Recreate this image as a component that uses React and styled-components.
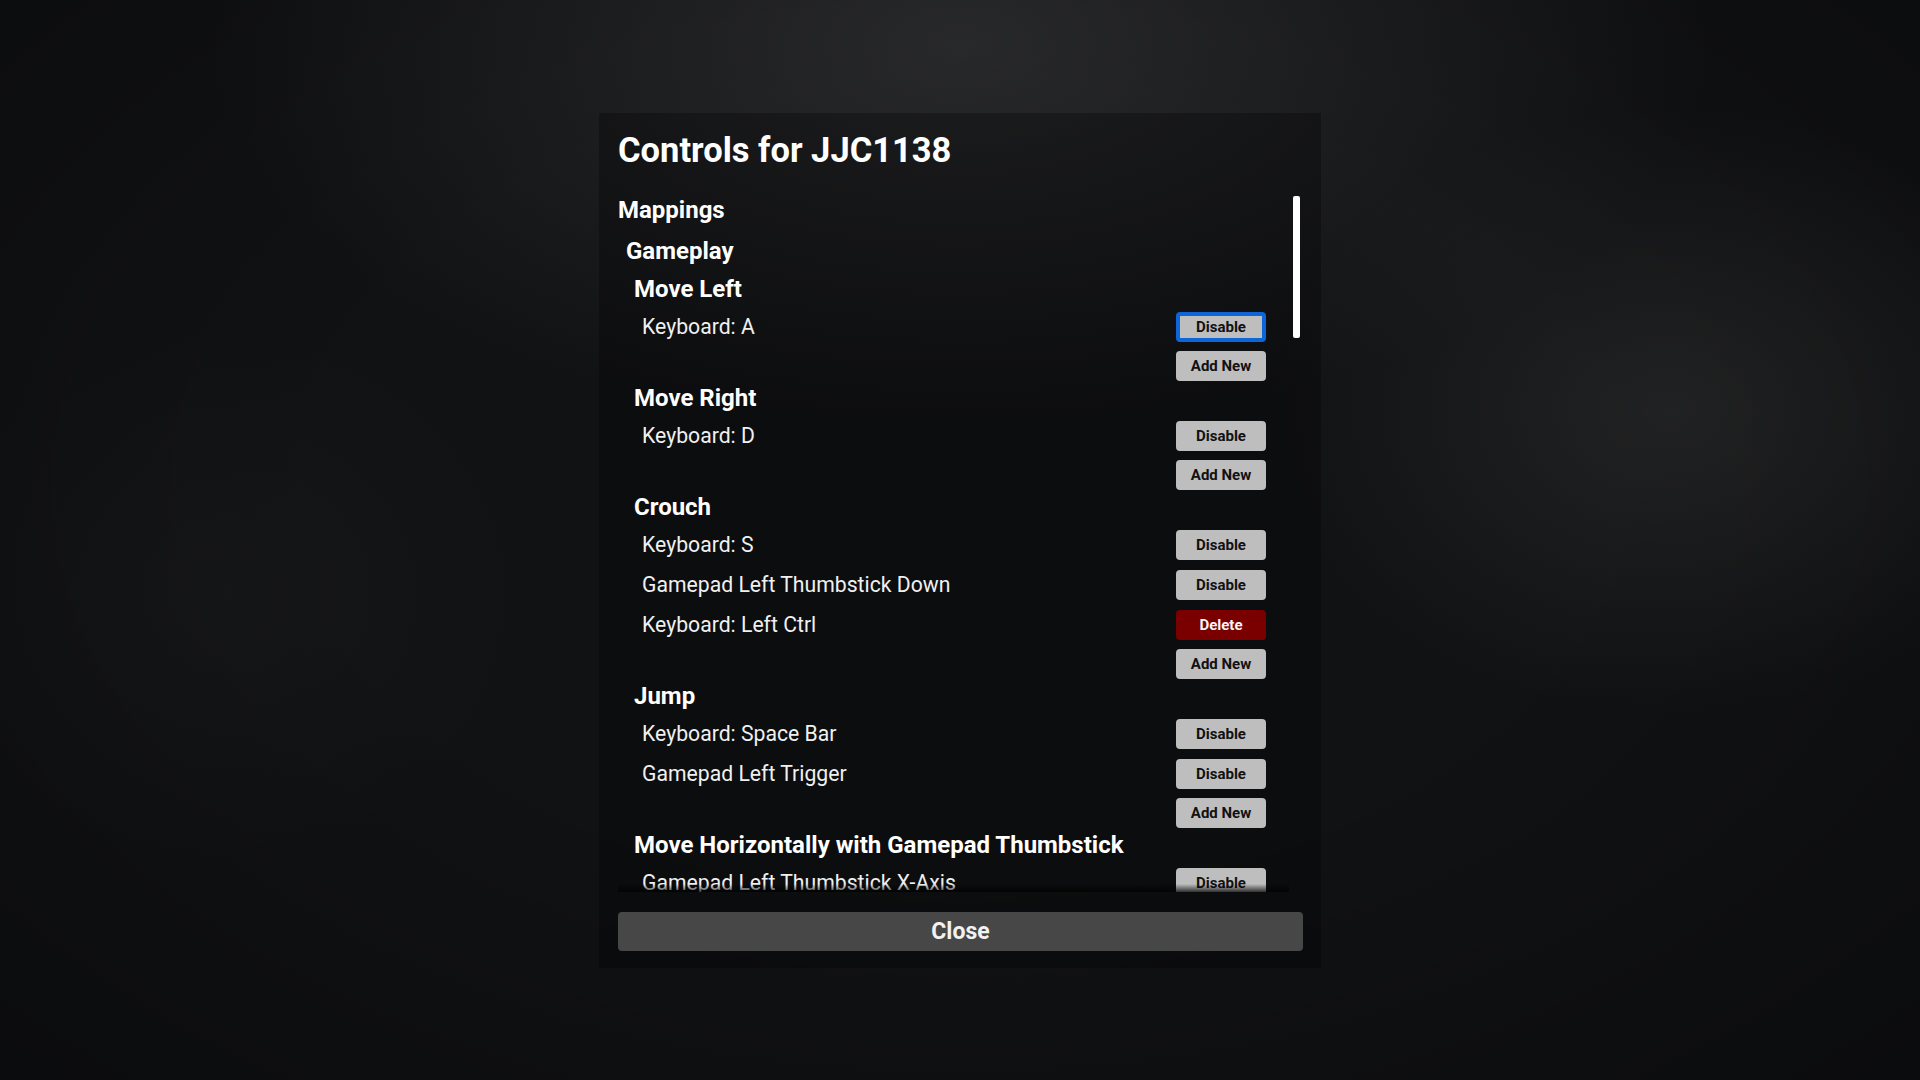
import React from 'react';
import styled, { createGlobalStyle } from 'styled-components';

const SECTIONS = [
  {
    name: 'Move Left',
    bindings: [{ label: 'Keyboard: A', action: 'Disable', focused: true }],
  },
  {
    name: 'Move Right',
    bindings: [{ label: 'Keyboard: D', action: 'Disable' }],
  },
  {
    name: 'Crouch',
    bindings: [
      { label: 'Keyboard: S', action: 'Disable' },
      { label: 'Gamepad Left Thumbstick Down', action: 'Disable' },
      { label: 'Keyboard: Left Ctrl', action: 'Delete' },
    ],
  },
  {
    name: 'Jump',
    bindings: [
      { label: 'Keyboard: Space Bar', action: 'Disable' },
      { label: 'Gamepad Left Trigger', action: 'Disable' },
    ],
  },
  {
    name: 'Move Horizontally with Gamepad Thumbstick',
    bindings: [{ label: 'Gamepad Left Thumbstick X-Axis', action: 'Disable' }],
  },
];

export default function App() {
  return (
    <>
      <GlobalStyle />
      <Screen>
        <Panel>
          <Title>Controls for JJC1138</Title>
          <ScrollBox>
            <ScrollContent>
              <Heading $level={0}>Mappings</Heading>
              <Heading $level={1}>Gameplay</Heading>
              <ActionList>
                {SECTIONS.map(section => (
                  <Action key={section.name}>
                    <Heading $level={2}>{section.name}</Heading>
                    {section.bindings.map(binding => (
                      <BindingRow key={binding.label}>
                        <BindingLabel>{binding.label}</BindingLabel>
                        <SmallButton
                          $danger={binding.action === 'Delete'}
                          $focused={binding.focused}
                        >
                          {binding.action}
                        </SmallButton>
                      </BindingRow>
                    ))}
                    <BindingRow $end>
                      <SmallButton>Add New</SmallButton>
                    </BindingRow>
                  </Action>
                ))}
              </ActionList>
            </ScrollContent>
            <ScrollTrack>
              <ScrollThumb />
            </ScrollTrack>
          </ScrollBox>
          <CloseButton>Close</CloseButton>
        </Panel>
      </Screen>
    </>
  );
}

const GlobalStyle = createGlobalStyle`
  html, body {
    margin: 0;
    padding: 0;
    overflow: hidden;
  }

  body {
    font-family: Roboto, 'Noto Sans', sans-serif;
    color: #f2f2f2;
  }
`;

const Screen = styled.div`
  display: flex;
  align-items: center;
  justify-content: center;
  width: 1920px;
  height: 1080px;
  background-color: #111214;
  background-image:
    radial-gradient(ellipse 1000px 520px at 50% 4%, rgba(60, 60, 62, 0.55), transparent 75%),
    radial-gradient(ellipse 560px 420px at 87% 38%, rgba(54, 54, 54, 0.45), transparent 72%),
    radial-gradient(ellipse 420px 380px at 12% 55%, rgba(30, 30, 32, 0.35), transparent 70%),
    radial-gradient(ellipse at 50% 45%, transparent 45%, rgba(0, 0, 0, 0.35) 100%);
`;

const Panel = styled.div`
  display: flex;
  flex-direction: column;
  box-sizing: border-box;
  width: 722px;
  height: 855px;
  padding: 17px 18px 16px 19px;
  background-color: rgba(0, 0, 0, 0.28);
`;

const Title = styled.h1`
  margin: 0 0 25px;
  font-size: 34.5px;
  font-weight: 700;
  line-height: 41px;
  color: #ffffff;
`;

const ScrollBox = styled.div`
  position: relative;
  display: flex;
  height: 696px;
  overflow: hidden;

  &::after {
    content: '';
    position: absolute;
    left: 0;
    right: 14px;
    bottom: 0;
    height: 8px;
    background: linear-gradient(to bottom, rgba(0, 0, 0, 0), rgba(0, 0, 0, 0.75));
  }
`;

const ScrollContent = styled.div`
  flex: 1;
  display: flex;
  flex-direction: column;
`;

const ScrollTrack = styled.div`
  flex: none;
  width: 7px;
  margin: 0 3px 0 27px;
`;

const ScrollThumb = styled.div`
  width: 100%;
  height: 142px;
  border-radius: 2px;
  background-color: #ffffff;
`;

const Heading = styled.div`
  flex: none;
  padding-left: ${({ $level }) => $level * 8}px;
  margin-bottom: ${({ $level }) => ($level === 0 ? 13 : $level === 1 ? 10 : 0)}px;
  font-size: 24px;
  font-weight: 700;
  line-height: 28px;
  color: #ffffff;
  white-space: nowrap;
`;

const ActionList = styled.div`
  display: flex;
  flex-direction: column;
  gap: 3px;
`;

const Action = styled.div`
  display: flex;
  flex-direction: column;
  gap: 8px;
`;

const BindingRow = styled.div`
  display: flex;
  align-items: center;
  justify-content: ${({ $end }) => ($end ? 'flex-end' : 'space-between')};
  height: ${({ $end }) => ($end ? 30 : 32)}px;
  padding-left: 24px;
`;

const BindingLabel = styled.span`
  font-size: 21.2px;
  font-weight: 400;
  color: #f0f0f0;
  white-space: nowrap;
`;

const SmallButton = styled.button`
  flex: none;
  box-sizing: border-box;
  width: 90px;
  height: 30px;
  padding: 0;
  border: ${({ $focused }) => ($focused ? '4px solid #0d66d8' : 'none')};
  border-radius: 4px;
  background-color: ${({ $danger }) => ($danger ? '#7a0000' : '#bebebe')};
  color: ${({ $danger }) => ($danger ? '#f4f4f4' : '#111111')};
  font-family: Roboto, 'Noto Sans', sans-serif;
  font-size: 15px;
  font-weight: 700;
  line-height: 22px;
  cursor: pointer;
`;

const CloseButton = styled.button`
  flex: none;
  height: 39px;
  margin: 20px 0 0;
  padding: 0;
  border: none;
  border-radius: 4px;
  background-color: #474747;
  color: #f2f2f2;
  font-family: Roboto, 'Noto Sans', sans-serif;
  font-size: 23px;
  font-weight: 700;
  cursor: pointer;
`;
